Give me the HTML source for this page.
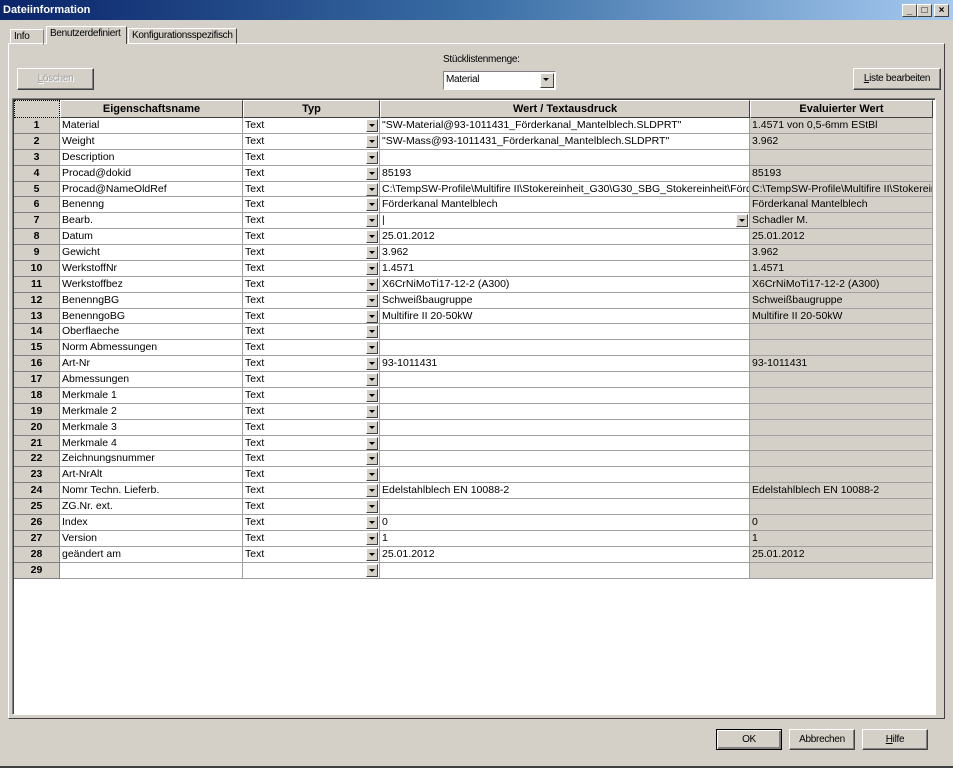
<!DOCTYPE html>
<html><head><meta charset="utf-8"><style>
*{box-sizing:border-box;margin:0;padding:0}
body{width:953px;height:768px;background:#d4d0c8;font-family:"Liberation Sans",Tahoma,sans-serif;font-size:11px;color:#000;position:relative;overflow:hidden}
.abs{position:absolute}
.nar{font-size:10px;letter-spacing:-0.3px}
#title{left:0;top:0;width:953px;height:20px;background:linear-gradient(90deg,#0a246a 0%,#3a6ea5 50%,#a6caf0 100%);color:#fff;font-weight:bold;font-size:11px;line-height:20px;padding-left:3px}
.wb{top:4px;width:15px;height:13px;background:#d4d0c8;border:1px solid;border-color:#fff #404040 #404040 #fff;font-size:10px;font-weight:bold;line-height:11px;text-align:center;color:#000}
.tab{top:28px;height:16px;border:1px solid;border-color:#fff #404040 transparent #fff;line-height:14px;padding:0 3px;white-space:nowrap}
.btn{background:#d4d0c8;border:1px solid;border-color:#fff #404040 #404040 #fff;box-shadow:inset -1px -1px 0 #808080;text-align:center}
.row{position:absolute;left:14px;width:919px}
.c{position:absolute;top:0;height:100%;border-right:1px solid #a0a0a0;border-bottom:1px solid #a0a0a0;line-height:15px;padding-left:2px;white-space:nowrap;overflow:hidden;background:#fff;font-size:10.5px}
.n{left:0;width:46px;background:#d4d0c8;font-weight:bold;text-align:center;padding:0;border-color:#808080}
.nm{left:46px;width:183px}
.ty{left:229px;width:137px}
.va{left:366px;width:370px}
.ev{left:736px;width:183px;background:#d4d0c8}
.dd{position:absolute;top:1px;width:12px;height:13px;background:#d4d0c8;border:1px solid;border-color:#fff #404040 #404040 #fff}
.dd:after{content:"";position:absolute;left:2px;top:4px;border-left:3px solid transparent;border-right:3px solid transparent;border-top:3px solid #000}
.h{position:absolute;top:0;height:18px;background:#d4d0c8;border:1px solid;border-color:#fff #404040 #404040 #fff;font-weight:bold;text-align:center;line-height:16px}
</style></head><body>
<div id="title" class="abs">Dateiinformation</div>
<div class="abs wb" style="left:902px">_</div>
<div class="abs wb" style="left:917px">□</div>
<div class="abs wb" style="left:934px">×</div>

<div class="abs" style="left:8px;top:43px;width:937px;height:676px;border:1px solid;border-color:#fff #404040 #404040 #fff"></div>
<div class="abs tab nar" style="left:10px;width:34px;border-color:#fff #808080 transparent #fff;top:29px">Info</div>
<div class="abs tab nar" style="left:46px;width:81px;top:26px;height:18px;background:#d4d0c8;border-bottom:none">Benutzerdefiniert</div>
<div class="abs tab nar" style="left:128px;width:109px">Konfigurationsspezifisch</div>

<div class="abs nar" style="left:443px;top:54px;width:100px">Stücklistenmenge:</div>
<div class="abs nar" style="left:443px;top:71px;width:113px;height:19px;background:#fff;border:1px solid;border-color:#808080 #fff #fff #808080;line-height:16px;padding-left:2px">Material<div class="dd" style="right:1px;left:auto;top:1px;height:15px;width:14px"></div></div>
<div class="abs btn nar" style="left:17px;top:68px;width:77px;height:22px;line-height:20px;color:#a0a0a0;text-shadow:1px 1px 0 #fff"><u>L</u>öschen</div>
<div class="abs btn nar" style="left:853px;top:68px;width:88px;height:22px;line-height:20px"><u>L</u>iste bearbeiten</div>

<div class="abs" style="left:12px;top:98px;width:924px;height:617px;background:#fff;border:1px solid;border-color:#808080 #fff #fff #808080;box-shadow:inset 1px 1px 0 #404040"></div>

<div class="row" style="top:100px;height:18px">
<div class="h" style="left:0;width:46px;border:1px dotted #000"></div>
<div class="h" style="left:46px;width:183px">Eigenschaftsname</div>
<div class="h" style="left:229px;width:137px">Typ</div>
<div class="h" style="left:366px;width:370px">Wert / Textausdruck</div>
<div class="h" style="left:736px;width:183px">Evaluierter Wert</div>
</div>

<div id="rows"></div>
<script>
var d=[
["Material","Text",'"SW-Material@93-1011431_Förderkanal_Mantelblech.SLDPRT"',"1.4571 von 0,5-6mm EStBl"],
["Weight","Text",'"SW-Mass@93-1011431_Förderkanal_Mantelblech.SLDPRT"',"3.962"],
["Description","Text","",""],
["Procad@dokid","Text","85193","85193"],
["Procad@NameOldRef","Text","C:\\TempSW-Profile\\Multifire II\\Stokereinheit_G30\\G30_SBG_Stokereinheit\\Förderka","C:\\TempSW-Profile\\Multifire II\\Stokereinhe"],
["Benenng","Text","Förderkanal Mantelblech","Förderkanal Mantelblech"],
["Bearb.","Text","|","Schadler M."],
["Datum","Text","25.01.2012","25.01.2012"],
["Gewicht","Text","3.962","3.962"],
["WerkstoffNr","Text","1.4571","1.4571"],
["Werkstoffbez","Text","X6CrNiMoTi17-12-2 (A300)","X6CrNiMoTi17-12-2 (A300)"],
["BenenngBG","Text","Schweißbaugruppe","Schweißbaugruppe"],
["BenenngoBG","Text","Multifire II 20-50kW","Multifire II 20-50kW"],
["Oberflaeche","Text","",""],
["Norm Abmessungen","Text","",""],
["Art-Nr","Text","93-1011431","93-1011431"],
["Abmessungen","Text","",""],
["Merkmale 1","Text","",""],
["Merkmale 2","Text","",""],
["Merkmale 3","Text","",""],
["Merkmale 4","Text","",""],
["Zeichnungsnummer","Text","",""],
["Art-NrAlt","Text","",""],
["Nomr Techn. Lieferb.","Text","Edelstahlblech EN 10088-2","Edelstahlblech EN 10088-2"],
["ZG.Nr. ext.","Text","",""],
["Index","Text","0","0"],
["Version","Text","1","1"],
["geändert am","Text","25.01.2012","25.01.2012"],
["","","",""]];
var h="";
function e(s){return s.replace(/&/g,"&amp;").replace(/</g,"&lt;")}
for(var i=0;i<d.length;i++){
var t=Math.round(118+i*15.88),t2=Math.round(118+(i+1)*15.88);
h+='<div class="row" style="top:'+t+'px;height:'+(t2-t)+'px"><div class="c n">'+(i+1)+'</div><div class="c nm">'+e(d[i][0])+'</div><div class="c ty">'+e(d[i][1])+'<div class="dd" style="left:123px"></div></div><div class="c va">'+e(d[i][2])+(i==6?'<div class="dd" style="left:356px"></div>':'')+'</div><div class="c ev">'+e(d[i][3])+'</div></div>';
}
document.getElementById("rows").innerHTML=h;
</script>

<div class="abs btn nar" style="left:716px;top:729px;width:66px;height:21px;line-height:19px;border:1px solid #000;box-shadow:inset 1px 1px 0 #fff,inset -2px -2px 0 #808080">OK</div>
<div class="abs btn nar" style="left:789px;top:729px;width:66px;height:21px;line-height:19px">Abbrechen</div>
<div class="abs btn nar" style="left:862px;top:729px;width:66px;height:21px;line-height:19px"><u>H</u>ilfe</div>
<div class="abs" style="left:0;top:766px;width:953px;height:2px;background:#404040"></div>
</body></html>
